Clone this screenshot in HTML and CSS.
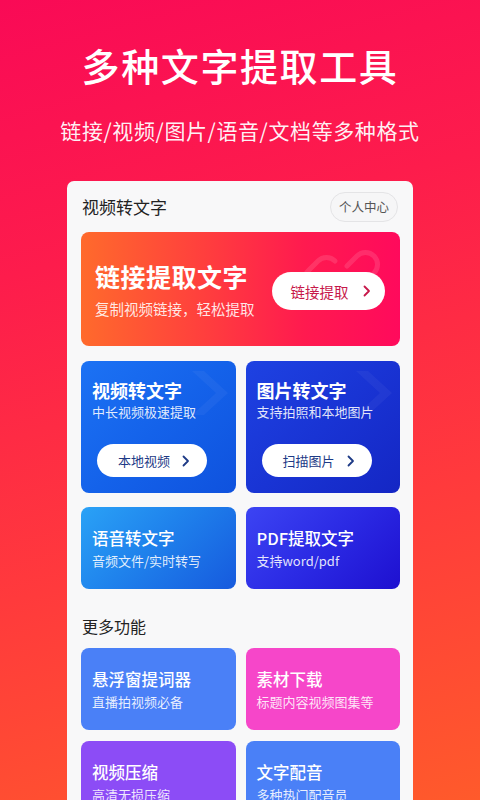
FILE: index.html
```html
<!DOCTYPE html>
<html lang="zh-CN">
<head>
<meta charset="utf-8">
<link rel="stylesheet" href="styles.css">
</head>
<body>
<div class="page">
  <header class="hero">
    <h1 class="hero-title">多种文字提取工具</h1>
    <p class="hero-sub">链接/视频/图片/语音/文档等多种格式</p>
  </header>

  <main class="panel">
    <div class="panel-head">
      <span class="panel-title">视频转文字</span>
      <span class="pill">个人中心</span>
    </div>

    <section class="banner">
      <svg class="banner-deco" width="80" height="80" viewBox="0 0 80 80" fill="none">
        <g stroke="rgba(255,255,255,0.12)" stroke-width="5" stroke-linecap="round">
          <path d="M34 46 L24 56 a12 12 0 0 1 -17 -17 L17 29 a12 12 0 0 1 17 0"/>
          <path d="M46 34 L56 24 a12 12 0 0 1 17 17 L63 51 a12 12 0 0 1 -17 0"/>
        </g>
      </svg>
      <div class="banner-text">
        <div class="banner-title">链接提取文字</div>
        <div class="banner-sub">复制视频链接，轻松提取</div>
      </div>
      <button class="btn btn-red">链接提取
        <svg class="chev" width="8" height="12" viewBox="0 0 8 12"><path d="M1.5 1.5 L6 6 L1.5 10.5" fill="none" stroke="currentColor" stroke-width="1.8" stroke-linecap="round" stroke-linejoin="round"/></svg>
      </button>
    </section>

    <div class="grid grid-top">
      <div class="tile tile-big t-blue1">
        <svg class="tile-deco" width="60" height="60" viewBox="0 0 60 60"><path d="M10 8 L34 30 L10 52 L22 52 L46 30 L22 8 Z" fill="rgba(255,255,255,0.045)"/></svg>
        <div class="tile-title big">视频转文字</div>
        <div class="tile-sub">中长视频极速提取</div>
        <button class="btn btn-white">本地视频
          <svg class="chev" width="8" height="12" viewBox="0 0 8 12"><path d="M1.5 1.5 L6 6 L1.5 10.5" fill="none" stroke="currentColor" stroke-width="1.8" stroke-linecap="round" stroke-linejoin="round"/></svg>
        </button>
      </div>
      <div class="tile tile-big t-blue2">
        <svg class="tile-deco" width="60" height="60" viewBox="0 0 60 60"><path d="M10 8 L34 30 L10 52 L22 52 L46 30 L22 8 Z" fill="rgba(255,255,255,0.045)"/></svg>
        <div class="tile-title big">图片转文字</div>
        <div class="tile-sub">支持拍照和本地图片</div>
        <button class="btn btn-white">扫描图片
          <svg class="chev" width="8" height="12" viewBox="0 0 8 12"><path d="M1.5 1.5 L6 6 L1.5 10.5" fill="none" stroke="currentColor" stroke-width="1.8" stroke-linecap="round" stroke-linejoin="round"/></svg>
        </button>
      </div>
    </div>

    <div class="grid grid-mid">
      <div class="tile t-sky">
        <div class="tile-title">语音转文字</div>
        <div class="tile-sub">音频文件/实时转写</div>
      </div>
      <div class="tile t-indigo">
        <div class="tile-title">PDF提取文字</div>
        <div class="tile-sub">支持word/pdf</div>
      </div>
    </div>

    <h2 class="more">更多功能</h2>

    <div class="grid grid-more">
      <div class="tile t-flat-blue">
        <div class="tile-title">悬浮窗提词器</div>
        <div class="tile-sub">直播拍视频必备</div>
      </div>
      <div class="tile t-pink">
        <div class="tile-title">素材下载</div>
        <div class="tile-sub">标题内容视频图集等</div>
      </div>
      <div class="tile t-purple">
        <div class="tile-title">视频压缩</div>
        <div class="tile-sub">高清无损压缩</div>
      </div>
      <div class="tile t-flat-blue">
        <div class="tile-title">文字配音</div>
        <div class="tile-sub">多种热门配音员</div>
      </div>
    </div>
  </main>
</div>
</body>
</html>
```

FILE: styles.css
```css
* { box-sizing: border-box; }
html, body {
  margin: 0;
  padding: 0;
}
body {
  width: 480px;
  height: 800px;
  overflow: hidden;
  font-family: "Noto Sans CJK SC", "Noto Sans", sans-serif;
  background: linear-gradient(165deg, #f90a56 0%, #fd1c4c 30%, #ff3a3c 65%, #ff5a2b 100%);
}
.page {
  display: flex;
  flex-direction: column;
}
.hero {
  padding-top: 40px;
  text-align: center;
  color: #fff;
}
.hero-title {
  margin: 0;
  font-size: 38px;
  line-height: 50px;
  font-weight: 500;
  letter-spacing: 1.6px;
}
.hero-sub {
  margin: 25px 0 0;
  font-size: 21px;
  line-height: 30px;
  font-weight: 400;
  letter-spacing: 0.6px;
  color: rgba(255,255,255,0.95);
}
.panel {
  margin: 36px 0 0 67px;
  width: 346px;
  background: #f8f8f9;
  border-radius: 7px 7px 0 0;
  padding: 0 13px 40px 14px;
}
.panel-head {
  display: flex;
  align-items: center;
  justify-content: space-between;
  padding: 11px 2px 10px 1px;
}
.panel-title {
  font-size: 17px;
  line-height: 30px;
  color: #222;
}
.pill {
  height: 30px;
  padding: 0 8px;
  border: 1px solid #e4e4e6;
  border-radius: 15px;
  font-size: 12.5px;
  line-height: 28px;
  color: #555;
  background: #f6f6f7;
}
.banner {
  position: relative;
  overflow: hidden;
  height: 114px;
  border-radius: 8px;
  background: linear-gradient(90deg, #ff6a2c 0%, #ff3d3e 40%, #ff1a4f 70%, #ff0a5c 100%);
  display: flex;
  align-items: center;
  justify-content: space-between;
  padding: 4px 15px 0 14px;
}
.banner-deco {
  position: absolute;
  left: 220px;
  top: 0;
}
.banner-text {
  position: relative;
  color: #fff;
  margin-top: -4px;
}
.banner-title {
  font-size: 25px;
  line-height: 32px;
  font-weight: 700;
  letter-spacing: 0.5px;
}
.banner-sub {
  margin-top: 7px;
  font-size: 14.5px;
  line-height: 20px;
  color: rgba(255,255,255,0.88);
}
.btn {
  position: relative;
  border: 0;
  font-family: inherit;
  display: inline-flex;
  align-items: center;
  justify-content: center;
  gap: 14px;
  background: #fff;
  cursor: pointer;
}
.btn-red {
  width: 113px;
  height: 38px;
  border-radius: 19px;
  font-size: 14.5px;
  color: #c7184a;
  padding: 0 0 0 4px;
}
.grid {
  display: grid;
  grid-template-columns: 1fr 1fr;
  column-gap: 10px;
}
.grid-top { margin-top: 15px; }
.grid-mid { margin-top: 14px; }
.grid-more { margin-top: 10px; row-gap: 11px; }
.tile {
  position: relative;
  overflow: hidden;
  border-radius: 8px;
  color: #fff;
  padding: 19px 8px 19px 11px;
  height: 82px;
}
.tile-big {
  height: 132px;
  padding-top: 17px;
}
.tile-deco {
  position: absolute;
  right: -6px;
  top: 2px;
}
.tile-title {
  position: relative;
  font-size: 16.5px;
  line-height: 24px;
  font-weight: 500;
  white-space: nowrap;
}
.tile-title.big {
  font-size: 18px;
  font-weight: 700;
}
.tile-sub {
  position: relative;
  margin-top: 2px;
  font-size: 13px;
  line-height: 18px;
  color: rgba(255,255,255,0.88);
  white-space: nowrap;
}
.tile-big .tile-sub { margin-top: 1px; }
.btn-white {
  margin: 23px 0 0 5px;
  width: 110px;
  height: 33px;
  border-radius: 17px;
  font-size: 13px;
  color: #1d3a86;
  gap: 12px;
  padding: 0 0 0 4px;
}
.t-blue1 { background: linear-gradient(135deg, #1c72f4 0%, #1462ea 50%, #0f52de 100%); }
.t-blue2 { background: linear-gradient(135deg, #1e42e2 0%, #1934d4 50%, #1426c4 100%); }
.t-sky { background: linear-gradient(135deg, #2aa2f6 0%, #1f82ec 45%, #165ade 100%); }
.t-indigo { background: linear-gradient(135deg, #3c44f3 0%, #2b2ae4 50%, #1e10d0 100%); }
.t-flat-blue { background: #4a80f7; }
.t-pink { background: #f646c9; }
.t-purple { background: #8c4cf6; }
.more {
  margin: 25px 0 0 1px;
  font-size: 16px;
  line-height: 24px;
  font-weight: 400;
  color: #222;
}
```
